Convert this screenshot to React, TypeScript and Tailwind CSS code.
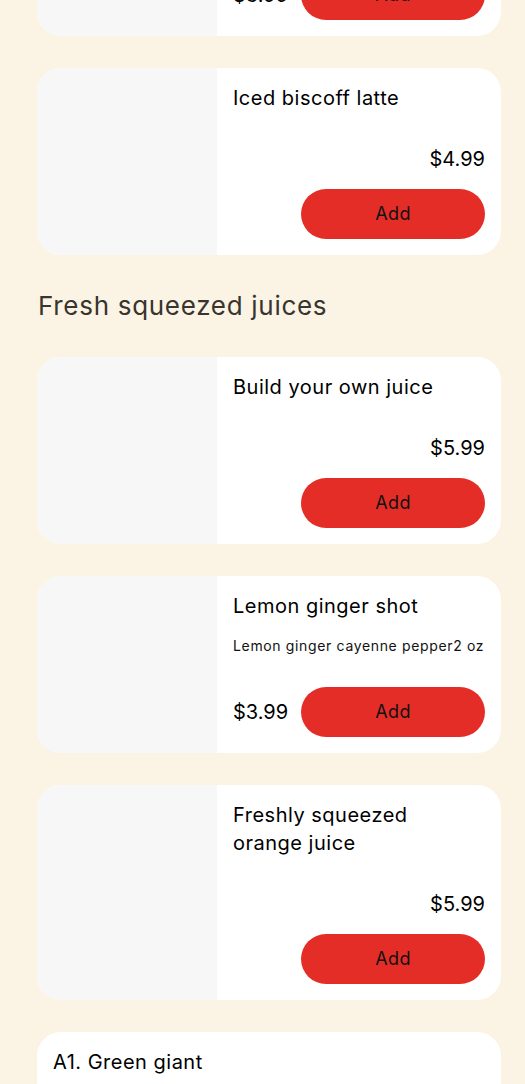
import React from "react";

type Item = {
  title: string;
  desc?: string;
  price: string;
  inline?: boolean;
  image?: boolean;
};

function AddButton() {
  return (
    <button className="h-[50px] w-[184px] shrink-0 rounded-full bg-[#e42d27] text-[18px] leading-[50px] tracking-[0.4px] text-[#111]">
      Add
    </button>
  );
}

function Card({ item }: { item: Item }) {
  const hasImage = item.image !== false;
  return (
    <div className="flex overflow-hidden rounded-[24px] bg-white">
      {hasImage && <div className="w-[180px] shrink-0 bg-[#f7f7f7]" />}
      <div className="flex min-w-0 flex-1 flex-col p-4">
        <h3 className="pr-10 text-[20px] leading-[28px] font-normal tracking-[0.5px] text-black">{item.title}</h3>
        {item.desc && (
          <p className="mt-4 text-[14px] leading-[20px] tracking-[0.65px] text-[#111] whitespace-nowrap">
            {item.desc}
          </p>
        )}
        {item.inline ? (
          <div className="mt-[31px] flex items-center justify-between">
            <span className="text-[20px] leading-[28px] text-black">{item.price}</span>
            <AddButton />
          </div>
        ) : (
          <div className="mt-[33px] flex flex-col items-end gap-4">
            <span className="text-[20px] leading-[28px] text-black">{item.price}</span>
            <AddButton />
          </div>
        )}
      </div>
    </div>
  );
}

export default function App() {
  return (
    <div className="min-h-screen overflow-hidden bg-[#fbf4e4] pl-[37px] pr-[24px] [font-family:Inter,sans-serif]">
      <div className="mt-[-105px] flex flex-col gap-8 pb-10">
        <Card item={{ title: "Iced caramel latte", price: "$3.99", inline: true }} />
        <Card item={{ title: "Iced biscoff latte", price: "$4.99" }} />
        <h2 className="pl-px text-[26px] leading-[38px] font-normal tracking-[0.7px] text-[#38342f]">
          Fresh squeezed juices
        </h2>
        <Card item={{ title: "Build your own juice", price: "$5.99" }} />
        <Card
          item={{
            title: "Lemon ginger shot",
            desc: "Lemon ginger cayenne pepper2 oz",
            price: "$3.99",
            inline: true,
          }}
        />
        <Card item={{ title: "Freshly squeezed orange juice", price: "$5.99" }} />
        <Card item={{ title: "A1. Green giant", price: "$8.99", image: false }} />
      </div>
    </div>
  );
}
